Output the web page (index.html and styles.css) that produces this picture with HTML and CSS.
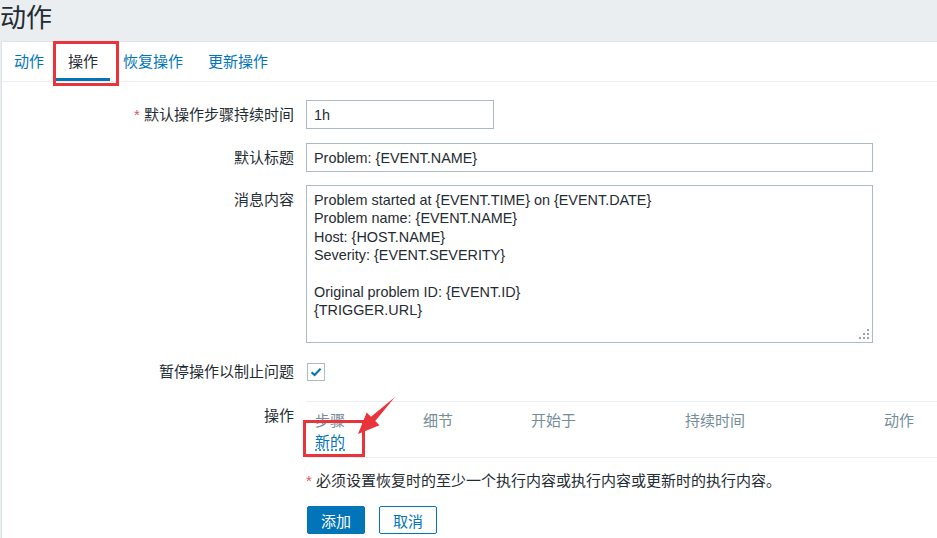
FILE: index.html
```html
<!DOCTYPE html>
<html lang="zh-CN">
<head>
  <meta charset="UTF-8">
  <meta name="viewport" content="width=device-width, initial-scale=1.0">
  <title>动作</title>
  <link rel="stylesheet" href="styles.css">
</head>
<body>
  <header class="page-title">
    <h1>动作</h1>
  </header>

  <main class="panel">
    <ul class="tabs">
      <li class="tab"><a href="#">动作</a></li>
      <li class="tab active">
        <a href="#">操作</a>
        <span class="mark mark-tab"></span>
      </li>
      <li class="tab"><a href="#">恢复操作</a></li>
      <li class="tab"><a href="#">更新操作</a></li>
    </ul>

    <form class="form">
      <div class="row row-1">
        <label class="row-label" for="esc-period"><span class="req">*</span> 默认操作步骤持续时间</label>
        <div class="row-field">
          <input class="input input-short" type="text" id="esc-period" value="1h">
        </div>
      </div>

      <div class="row row-2">
        <label class="row-label" for="def-subject">默认标题</label>
        <div class="row-field">
          <input class="input input-long" type="text" id="def-subject" value="Problem: {EVENT.NAME}">
        </div>
      </div>

      <div class="row row-3">
        <label class="row-label" for="def-message">消息内容</label>
        <div class="row-field">
          <div class="textarea-box">
            <textarea class="textarea" id="def-message">Problem started at {EVENT.TIME} on {EVENT.DATE}
Problem name: {EVENT.NAME}
Host: {HOST.NAME}
Severity: {EVENT.SEVERITY}

Original problem ID: {EVENT.ID}
{TRIGGER.URL}</textarea>
            <svg class="grip" width="12" height="12" viewBox="0 0 12 12">
              <rect x="9" y="1" width="2" height="2" fill="#9aa5ab"/>
              <rect x="5" y="5" width="2" height="2" fill="#9aa5ab"/>
              <rect x="9" y="5" width="2" height="2" fill="#9aa5ab"/>
              <rect x="1" y="9" width="2" height="2" fill="#9aa5ab"/>
              <rect x="5" y="9" width="2" height="2" fill="#9aa5ab"/>
              <rect x="9" y="9" width="2" height="2" fill="#9aa5ab"/>
            </svg>
          </div>
        </div>
      </div>

      <div class="row row-4">
        <label class="row-label">暂停操作以制止问题</label>
        <div class="row-field">
          <span class="checkbox">
            <svg width="16" height="16" viewBox="0 0 16 16">
              <path d="M3.5 8.2 L6.6 11 L12.6 4.8" fill="none" stroke="#0275b8" stroke-width="2"/>
            </svg>
          </span>
        </div>
      </div>

      <div class="row row-5">
        <label class="row-label">操作</label>
        <div class="row-field">
          <div class="ops">
            <table class="ops-table">
              <thead>
                <tr>
                  <th class="col-step">步骤</th>
                  <th class="col-detail">细节</th>
                  <th class="col-start">开始于</th>
                  <th class="col-duration">持续时间</th>
                  <th class="col-action">动作</th>
                </tr>
              </thead>
              <tbody>
                <tr>
                  <td colspan="5"><a href="#" class="link-new">新的</a></td>
                </tr>
              </tbody>
            </table>
            <span class="mark mark-new"></span>
            <svg class="arrow" width="60" height="50" viewBox="0 0 60 50">
              <polygon points="49,6 29.2,30 33.5,34.3 12,43 20.7,21.5 25,25.8" fill="#e8343a"/>
            </svg>
          </div>
        </div>
      </div>

      <div class="row row-6">
        <span class="row-label"></span>
        <div class="row-field">
          <p class="hint"><span class="req">*</span> 必须设置恢复时的至少一个执行内容或执行内容或更新时的执行内容。</p>
        </div>
      </div>

      <div class="row row-7">
        <span class="row-label"></span>
        <div class="row-field buttons">
          <button type="button" class="btn btn-primary">添加</button>
          <button type="button" class="btn btn-alt">取消</button>
        </div>
      </div>
    </form>
  </main>
</body>
</html>
```

FILE: styles.css
```css
body {
  margin: 0;
  width: 937px;
  height: 538px;
  overflow: hidden;
  background-color: #ebeef0;
  font-family: "Liberation Sans", "Noto Sans CJK SC", sans-serif;
  font-size: 15px;
  color: #1f2c33;
}

.page-title h1 {
  margin: 0;
  height: 41px;
  line-height: 37px;
  font-size: 26px;
  font-weight: normal;
  color: #1f2c33;
}

.panel {
  margin-left: 1px;
  height: 497px;
  background-color: #fff;
  border-top: 1px solid #dfe4e7;
  border-left: 1px solid #dfe4e7;
}

/* 页签 */
.tabs {
  display: flex;
  margin: 0;
  padding: 0;
  list-style: none;
  height: 39px;
  border-bottom: 1px solid #ebeef0;
}

.tab {
  position: relative;
  display: flex;
  align-items: center;
  padding: 0 12px;
  margin-right: 1px;
  box-sizing: border-box;
}

.tab:first-child {
  margin-right: 0;
}

.tab a {
  color: #0275b8;
  text-decoration: none;
  line-height: 20px;
}

.tab.active {
  border-bottom: 3px solid #0275b8;
  padding-top: 3px;
}

.tab.active a {
  color: #1f2c33;
}

/* 红色标注框 */
.mark {
  position: absolute;
  border: 3px solid #e8343a;
  box-sizing: border-box;
  pointer-events: none;
}

.mark-tab {
  left: -3px;
  top: -1px;
  width: 66px;
  height: 45px;
}

/* 表单 */
.form {
  padding-top: 18px;
}

.row {
  display: grid;
  grid-template-columns: 292px 631px;
  column-gap: 12px;
}

.row-label {
  text-align: right;
  line-height: 29px;
}

.req {
  color: #e45959;
}

.row-1 { margin-bottom: 14px; }
.row-2 { margin-bottom: 13px; }
.row-3 { margin-bottom: 14px; }
.row-4 { margin-bottom: 15px; }
.row-5 { margin-bottom: 9px; }
.row-6 { margin-bottom: 11px; }

.input {
  display: block;
  height: 29px;
  padding: 0 7px;
  border: 1px solid #acbbc2;
  box-sizing: border-box;
  font-family: "Liberation Sans", "Noto Sans CJK SC", sans-serif;
  font-size: 14.4px;
  color: #1f2c33;
  background-color: #fff;
}

.input-short {
  width: 188px;
}

.input-long {
  width: 567px;
}

.textarea-box {
  position: relative;
  width: 567px;
  height: 158px;
}

.textarea {
  display: block;
  width: 100%;
  height: 100%;
  margin: 0;
  padding: 5px 7px;
  border: 1px solid #acbbc2;
  box-sizing: border-box;
  resize: none;
  overflow: hidden;
  font-family: "Liberation Sans", "Noto Sans CJK SC", sans-serif;
  font-size: 14.4px;
  line-height: 18.4px;
  color: #1f2c33;
}

.grip {
  position: absolute;
  right: 3px;
  bottom: 3px;
}

.row-4 .row-field {
  display: flex;
  align-items: center;
}

.checkbox {
  display: flex;
  align-items: center;
  justify-content: center;
  width: 18px;
  height: 18px;
  margin-left: 1px;
  border: 1px solid #acbbc2;
  box-sizing: border-box;
  background-color: #fff;
}

/* 操作列表 */
.ops {
  position: relative;
}

.ops-table {
  width: 631px;
  border-collapse: collapse;
  table-layout: fixed;
  border-top: 1px solid #ebeef0;
  border-bottom: 1px solid #ebeef0;
}

.ops-table th {
  padding: 8px 0 0 9px;
  height: 21px;
  font-weight: normal;
  text-align: left;
  color: #768d99;
  line-height: 20px;
}

.ops-table .col-step { width: 99px; }
.ops-table .col-detail { width: 99px; }
.ops-table .col-start { width: 145px; }
.ops-table .col-duration { width: 155px; }
.ops-table .col-action {
  text-align: right;
  padding-right: 23px;
}

.ops-table td {
  padding: 1px 9px 5px;
  line-height: 20px;
}

.link-new {
  color: #0275b8;
  text-decoration: underline dotted;
  text-underline-offset: 3px;
}

.mark-new {
  left: -3px;
  top: 19px;
  width: 62px;
  height: 37px;
}

.arrow {
  position: absolute;
  left: 40px;
  top: -10px;
}

.hint {
  margin: 0;
  line-height: 28px;
}

.buttons {
  display: flex;
  gap: 14px;
  padding-left: 1px;
}

.btn {
  width: 58px;
  height: 28px;
  padding: 0;
  border: 1px solid #0275b8;
  border-radius: 2px;
  font-family: "Liberation Sans", "Noto Sans CJK SC", sans-serif;
  font-size: 15px;
  cursor: pointer;
}

.btn-primary {
  background-color: #0275b8;
  color: #fff;
}

.btn-alt {
  background-color: #fff;
  color: #0275b8;
}
```
